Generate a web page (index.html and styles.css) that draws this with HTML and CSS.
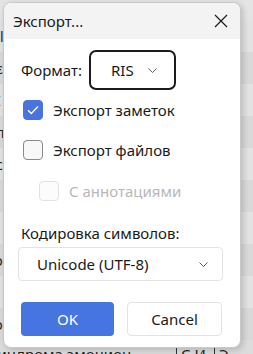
FILE: index.html
```html
<!DOCTYPE html>
<html>
<head>
<meta charset="utf-8">
<link rel="stylesheet" href="styles.css">
</head>
<body>
<div class="backdrop">
  <div class="brow a"><span class="cell c1">Іl</span></div>
  <div class="brow b"><span class="cell c1">ɛ</span></div>
  <div class="brow a"><span class="cell c1">I</span></div>
  <div class="brow b"><span class="cell c1">п</span></div>
  <div class="brow a"><span class="cell c1">с</span></div>
  <div class="brow b"><span class="cell c1">l</span></div>
  <div class="brow a"><span class="cell c1">l</span></div>
  <div class="brow b"><span class="cell c1">ɔ</span></div>
  <div class="brow a"><span class="cell c1">l</span></div>
  <div class="brow b"><span class="cell c1">ɔ</span></div>
  <div class="brow last"><span class="cell wide">синдрома эмоцион</span><span class="cell sep">С.И.</span><span class="cell sep">Э</span></div>
</div>

<div class="dialog">
  <div class="titlebar">
    <span class="title">Экспорт...</span>
    <span class="close">
      <svg width="14" height="14" viewBox="0 0 14 14"><path d="M1 1 L13 13 M13 1 L1 13" stroke="#1a1a1a" stroke-width="1.2" fill="none"/></svg>
    </span>
  </div>
  <div class="content">
    <div class="format-row">
      <span class="label">Формат:</span>
      <div class="select-dark">
        <span>RIS</span>
        <svg class="chev" width="9" height="5" viewBox="0 0 9 5"><path d="M0.5 0.5 L4.5 4.5 L8.5 0.5" stroke="#5c5c5c" stroke-width="1" fill="none"/></svg>
      </div>
    </div>
    <div class="check-row r1">
      <span class="box checked">
        <svg width="12" height="10" viewBox="0 0 12 10"><path d="M1 5.2 L4.3 8.4 L11 1.6" stroke="#fff" stroke-width="1.4" fill="none"/></svg>
      </span>
      <span class="ctext">Экспорт заметок</span>
    </div>
    <div class="check-row r2">
      <span class="box"></span>
      <span class="ctext">Экспорт файлов</span>
    </div>
    <div class="check-row r3">
      <span class="box disabled"></span>
      <span class="ctext dis">С аннотациями</span>
    </div>
    <div class="enc-label">Кодировка символов:</div>
    <div class="select-light">
      <span>Unicode (UTF-8)</span>
      <svg class="chev" width="9" height="5" viewBox="0 0 9 5"><path d="M0.5 0.5 L4.5 4.5 L8.5 0.5" stroke="#5c5c5c" stroke-width="1" fill="none"/></svg>
    </div>
    <div class="buttons">
      <div class="btn ok">OK</div>
      <div class="btn cancel">Cancel</div>
    </div>
  </div>
</div>
</body>
</html>
```

FILE: styles.css
```css
html, body {
  margin: 0;
  padding: 0;
  width: 253px;
  height: 354px;
  overflow: hidden;
}
body {
  position: relative;
  background: #e4e4e4;
  font-family: "Noto Sans", "Open Sans", sans-serif;
  color: #1a1a1a;
}
.backdrop {
  display: flex;
  flex-direction: column;
  padding-top: 20px;
}
.brow {
  height: 32px;
  display: flex;
  align-items: center;
  font-size: 14px;
  color: #222;
}
.brow.a { background: #e2e2e2; }
.brow.b { background: #d9d9d9; }
.brow.last {
  background: #dcdcdc;
  height: 20px;
  align-items: flex-end;
}
.cell.c1 {
  margin-left: -4px;
  width: 8px;
  overflow: hidden;
  font-size: 14px;
}
.cell.wide {
  margin-left: -10px;
  width: 186px;
  white-space: nowrap;
  overflow: hidden;
  font-size: 15px;
  line-height: 12px;
}
.cell.sep {
  border-left: 1px solid #333;
  padding: 0 4px;
  font-size: 15px;
  line-height: 12px;
}

.dialog {
  position: absolute;
  left: 3px;
  top: 2px;
  width: 236px;
  height: 344px;
  border: 1px solid #c9c9c9;
  border-radius: 8px;
  background: #fff;
  overflow: hidden;
  box-shadow: 2px 2px 6px rgba(0,0,0,0.18);
  display: flex;
  flex-direction: column;
}
.titlebar {
  height: 36px;
  background: #f3f3f3;
  display: flex;
  align-items: center;
  justify-content: space-between;
  padding: 0 12px 0 9px;
  flex-shrink: 0;
}
.title {
  font-size: 15px;
}
.close {
  display: flex;
  width: 14px;
  height: 14px;
}
.content {
  display: flex;
  flex-direction: column;
  padding-left: 17px;
}
.format-row {
  margin-top: 11px;
  height: 40px;
  display: flex;
  align-items: center;
}
.label {
  font-size: 15px;
  width: 68px;
}
.select-dark {
  box-sizing: border-box;
  width: 87px;
  height: 40px;
  border: 2px solid #1b1b1b;
  border-radius: 7px;
  display: flex;
  align-items: center;
  padding-left: 20px;
  font-size: 15px;
}
.select-dark .chev {
  margin-left: 14px;
}
.check-row {
  display: flex;
  align-items: center;
  height: 20px;
  padding-left: 2px;
}
.check-row.r1 { margin-top: 10px; }
.check-row.r2 { margin-top: 20px; }
.check-row.r3 { margin-top: 21px; padding-left: 18px; }
.box {
  box-sizing: border-box;
  width: 20px;
  height: 20px;
  border-radius: 4px;
  border: 1px solid #8a8a8a;
  background: #f8f8f8;
  display: flex;
  align-items: center;
  justify-content: center;
}
.box.checked {
  background: #4a73dd;
  border-color: #4a73dd;
}
.box.disabled {
  border-color: #e2e2e2;
  background: #fcfcfc;
}
.ctext {
  margin-left: 10px;
  font-size: 15px;
}
.ctext.dis { color: #b8b8b8; }
.enc-label {
  margin-top: 22px;
  font-size: 15px;
  height: 20px;
  line-height: 20px;
}
.select-light {
  box-sizing: border-box;
  margin-top: 4px;
  margin-left: -3px;
  width: 205px;
  height: 34px;
  border: 1px solid #e3e3e3;
  border-radius: 4px;
  display: flex;
  align-items: center;
  justify-content: space-between;
  padding: 0 14px 0 18px;
  font-size: 15px;
}
.buttons {
  margin-top: 21px;
  display: flex;
  gap: 13px;
}
.btn {
  box-sizing: border-box;
  height: 34px;
  width: 93px;
  border-radius: 4px;
  display: flex;
  align-items: center;
  justify-content: center;
  font-size: 15px;
}
.btn.ok {
  background: #4674e1;
  color: #fff;
}
.btn.cancel {
  width: 95px;
  border: 1px solid #e3e3e3;
  background: #fff;
}
```
